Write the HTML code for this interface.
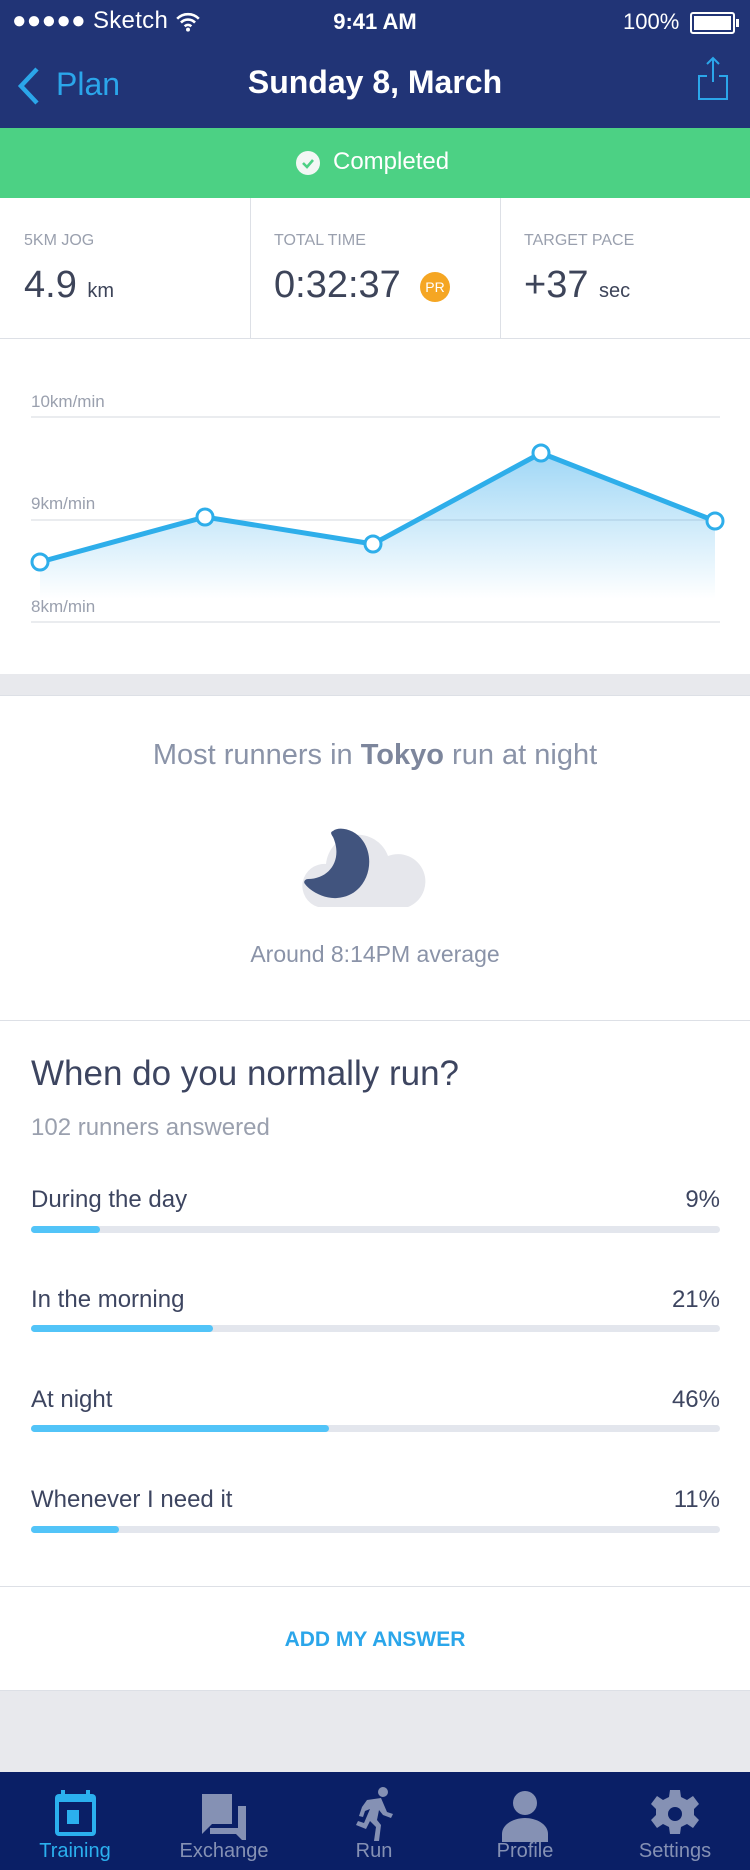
<!DOCTYPE html>
<html><head><meta charset="utf-8"><style>
*{margin:0;padding:0;box-sizing:border-box}
body{width:750px;height:1870px;position:relative;font-family:"Liberation Sans",sans-serif;background:#e8e9ed;overflow:hidden}
.a{position:absolute}
.nav{left:0;top:0;width:750px;height:128px;background:#213476;color:#fff}
.green{left:0;top:128px;width:750px;height:70px;background:#4cd184}
.white{background:#fff;left:0;width:750px}
.lbl{font-size:16px;color:#9aa0ae}
.val{font-size:38px;color:#3d4459}
.val small{font-size:20px}
.row{left:31px;width:689px;font-size:24px;color:#3d4560}
.bar{left:31px;width:689px;height:7px;border-radius:4px;background:#e3e6ed}
.bar i{display:block;height:7px;border-radius:4px;background:#52c4f8}
.tab{top:1772px;height:98px;background:#0a1f66;left:0;width:750px}
.tl{font-size:20px;color:#8591b4;top:1840px;width:150px;text-align:center}
</style></head><body>
<div class="a nav">
<div class="a" style="left:12px;top:7px;font-size:24px;letter-spacing:0.3px">●●●●● Sketch</div>
<svg class="a" style="left:175px;top:12px" width="26" height="20" viewBox="0 0 24 18"><path d="M2 6a14 14 0 0 1 20 0M5.5 9.5a9 9 0 0 1 13 0M9 13a4 4 0 0 1 6 0" stroke="#fff" stroke-width="2.4" fill="none"/><circle cx="12" cy="16" r="1.8" fill="#fff"/></svg>
<div class="a" style="left:0;width:750px;text-align:center;top:9px;font-size:22px;font-weight:bold">9:41 AM</div>
<div class="a" style="left:623px;top:9px;font-size:22px">100%</div>
<div class="a" style="left:690px;top:12px;width:45px;height:22px;border:2px solid #fff;border-radius:3px;padding:2px"><div style="background:#fff;height:100%"></div></div>
<div class="a" style="left:736px;top:19px;width:3px;height:8px;background:#fff"></div>
<svg class="a" style="left:16px;top:66px" width="26" height="40"><path d="M21 3L5 20l16 17" stroke="#2ba6ea" stroke-width="4.5" fill="none"/></svg>
<div class="a" style="left:56px;top:66px;font-size:32px;color:#2ba6ea">Plan</div>
<div class="a" style="left:0;width:750px;text-align:center;top:64px;font-size:32px;font-weight:bold">Sunday 8, March</div>
<svg class="a" style="left:697px;top:56px" width="34" height="46"><path d="M10 20H2v23h28V20h-8M16 2v24M10 8l6-6 6 6" stroke="#2ba6ea" stroke-width="2" fill="none"/></svg>
</div>
<div class="a green">
<svg class="a" style="left:295px;top:22px" width="26" height="26"><circle cx="13" cy="13" r="12" fill="#f2f7f4"/><path d="M8 13l4 4 6-7" stroke="#4cd184" stroke-width="2.6" fill="none"/></svg>
<div class="a" style="left:333px;top:20px;font-size:24px;color:#fff">Completed</div>
</div>
<div class="a white" style="top:198px;height:141px;border-bottom:1px solid #dde0e6">
<div class="a" style="left:250px;top:0;width:1px;height:140px;background:#dde0e6"></div>
<div class="a" style="left:500px;top:0;width:1px;height:140px;background:#dde0e6"></div>
<div class="a lbl" style="left:24px;top:34px">5KM JOG</div>
<div class="a lbl" style="left:274px;top:34px">TOTAL TIME</div>
<div class="a lbl" style="left:524px;top:34px">TARGET PACE</div>
<div class="a val" style="left:24px;top:66px">4.9 <small>km</small></div>
<div class="a val" style="left:274px;top:66px">0:32:37</div>
<div class="a" style="left:420px;top:74px;width:30px;height:30px;border-radius:50%;background:#f5a623;color:#fff;font-size:14px;text-align:center;line-height:30px">PR</div>
<div class="a val" style="left:524px;top:66px">+37 <small>sec</small></div>
</div>
<div class="a white" style="top:339px;height:335px">
<svg width="750" height="335" style="position:absolute;left:0;top:0">
<defs><linearGradient id="g" x1="0" y1="0" x2="0" y2="1"><stop offset="0" stop-color="#2ba6ea" stop-opacity=".45"/><stop offset="1" stop-color="#2ba6ea" stop-opacity="0"/></linearGradient></defs>
<line x1="31" y1="78" x2="720" y2="78" stroke="#e3e5ea" stroke-width="1.5"/>
<line x1="31" y1="181" x2="720" y2="181" stroke="#e3e5ea" stroke-width="1.5"/>
<line x1="31" y1="283" x2="720" y2="283" stroke="#e3e5ea" stroke-width="1.5"/>
<text x="31" y="68" font-size="17" fill="#9aa0ae" font-family="Liberation Sans">10km/min</text>
<text x="31" y="170" font-size="17" fill="#9aa0ae" font-family="Liberation Sans">9km/min</text>
<text x="31" y="273" font-size="17" fill="#9aa0ae" font-family="Liberation Sans">8km/min</text>
<path d="M40 223L205 178L373 205L541 114L715 182V260H40Z" fill="url(#g)"/>
<path d="M40 223L205 178L373 205L541 114L715 182" stroke="#2eaeea" stroke-width="5" fill="none"/>
<g fill="#fff" stroke="#2eaeea" stroke-width="3"><circle cx="40" cy="223" r="8"/><circle cx="205" cy="178" r="8"/><circle cx="373" cy="205" r="8"/><circle cx="541" cy="114" r="8"/><circle cx="715" cy="182" r="8"/></g>
</svg>
</div>
<div class="a white" style="top:695px;height:326px;border-bottom:1px solid #dde0e6;border-top:1px solid #dde0e6">
<div class="a" style="left:0;width:750px;text-align:center;top:43px;font-size:29px;color:#8a93a8">Most runners in <b style="color:#7d869c">Tokyo</b> run at night</div>
<svg class="a" style="left:293px;top:122px" width="145" height="95" viewBox="0 0 145 85"><path d="M25 84a22 22 0 0 1 8-43a32 32 0 0 1 62-8a26 26 0 0 1 20 51Z" fill="#e6e7ec"/><path d="M40 8c6-5 22-2 30 10c14 20 4 55-26 57c-12 1-26-6-32-14c-2-2 0-5 3-5c22 0 35-20 25-42c-2-3-3-5 0-6Z" fill="#41547e"/></svg>
<div class="a" style="left:0;width:750px;text-align:center;top:245px;font-size:23px;color:#8a93a8">Around 8:14PM average</div>
</div>
<div class="a white" style="top:1021px;height:566px;border-bottom:1px solid #dde0e6">
<div class="a" style="left:31px;top:33px;font-size:35px;color:#3d4560">When do you normally run?</div>
<div class="a" style="left:31px;top:93px;font-size:24px;color:#9aa0ae">102 runners answered</div>
</div>
<div class="a row" style="top:1186px">During the day<span style="float:right">9%</span></div>
<div class="a bar" style="top:1226px"><i style="width:69px"></i></div>
<div class="a row" style="top:1286px">In the morning<span style="float:right">21%</span></div>
<div class="a bar" style="top:1325px"><i style="width:182px"></i></div>
<div class="a row" style="top:1386px">At night<span style="float:right">46%</span></div>
<div class="a bar" style="top:1425px"><i style="width:298px"></i></div>
<div class="a row" style="top:1486px">Whenever I need it<span style="float:right">11%</span></div>
<div class="a bar" style="top:1526px"><i style="width:88px"></i></div>
<div class="a white" style="top:1587px;height:104px;border-bottom:1px solid #dde0e6">
<div class="a" style="left:0;width:750px;text-align:center;top:41px;font-size:21px;font-weight:bold;color:#2ba6ea">ADD MY ANSWER</div>
</div>
<div class="a tab">
<svg class="a" style="left:53px;top:16px" width="45" height="50"><rect x="2" y="6" width="41" height="42" rx="4" fill="#2bb0ee"/><rect x="8" y="2" width="4" height="8" fill="#2bb0ee"/><rect x="33" y="2" width="4" height="8" fill="#2bb0ee"/><rect x="6" y="14" width="33" height="30" fill="#0a1f66"/><rect x="14" y="22" width="12" height="14" fill="#2bb0ee"/></svg>
<svg class="a" style="left:200px;top:20px" width="50" height="48"><path d="M2 2h30v30H12l-10 10Z" fill="#8591b4"/><path d="M38 14h8v38l-10-10H10v-6h28Z" fill="#8591b4"/></svg>
<svg class="a" style="left:353px;top:14px" width="42" height="56"><circle cx="30" cy="6" r="5" fill="#8591b4"/><path d="M14 14l14-2 6 14 6 2-2 4-8-3-4-5-2 10 4 5-2 16h-5l2-14-6-6-4 8-10-4 2-4 6 2 6-14-5 2-2 6-4-1 3-9Z" fill="#8591b4"/></svg>
<svg class="a" style="left:500px;top:16px" width="50" height="54"><circle cx="25" cy="15" r="12" fill="#8591b4"/><path d="M2 54v-8c0-10 12-16 23-16s23 6 23 16v8Z" fill="#8591b4"/></svg>
<svg class="a" style="left:650px;top:16px" width="50" height="52"><path d="M20 2h10l1 7 6 3 6-4 6 8-5 5v6l5 5-6 8-6-4-6 3-1 7H20l-1-7-6-3-6 4-6-8 5-5v-6l-5-5 6-8 6 4 6-3Z" fill="#8591b4"/><circle cx="25" cy="26" r="7" fill="#0a1f66"/></svg>
</div>
<div class="a tl" style="left:0;color:#2bb0ee">Training</div>
<div class="a tl" style="left:149px">Exchange</div>
<div class="a tl" style="left:299px">Run</div>
<div class="a tl" style="left:450px">Profile</div>
<div class="a tl" style="left:600px">Settings</div>
</body></html>
